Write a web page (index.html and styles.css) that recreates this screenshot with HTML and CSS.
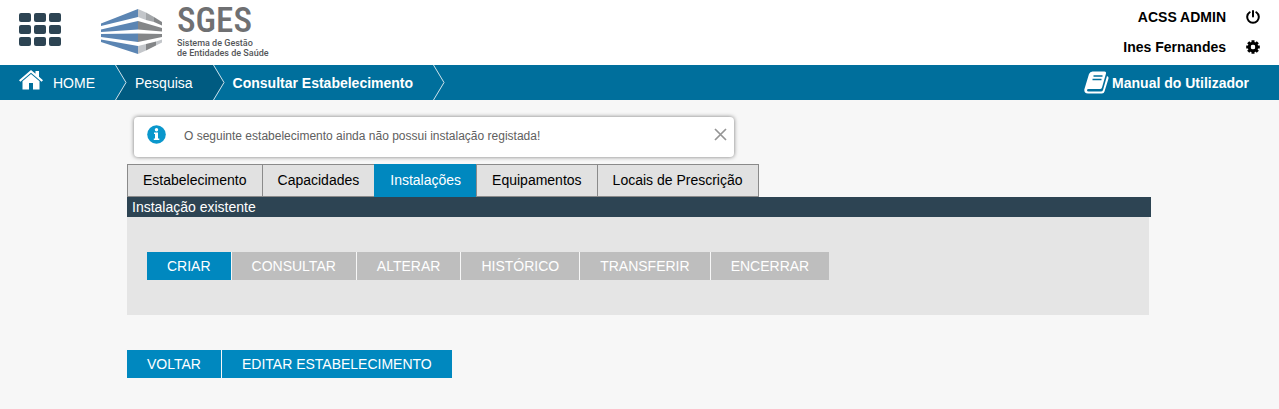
FILE: index.html
```html
<!DOCTYPE html>
<html lang="pt">
<head>
<meta charset="utf-8">
<title>SGES - Consultar Estabelecimento</title>
<link rel="stylesheet" href="styles.css">
</head>
<body>
<header class="header">
  <button class="apps" type="button" aria-label="Menu">
    <svg width="42" height="34" viewBox="0 0 42 34" fill="#2d4453">
      <rect x="0" y="0" width="12" height="9" rx="2"/><rect x="15" y="0" width="12" height="9" rx="2"/><rect x="30" y="0" width="12" height="9" rx="2"/>
      <rect x="0" y="12" width="12" height="9" rx="2"/><rect x="15" y="12" width="12" height="9" rx="2"/><rect x="30" y="12" width="12" height="9" rx="2"/>
      <rect x="0" y="24" width="12" height="9" rx="2"/><rect x="15" y="24" width="12" height="9" rx="2"/><rect x="30" y="24" width="12" height="9" rx="2"/>
    </svg>
  </button>
  <a class="logo" href="#">
    <svg width="62" height="46" viewBox="0 0 62 46">
      <g fill="#5b85b3">
        <path d="M0 14.5 37 0v8L0 17z"/>
        <path d="M0 20.500 37 12v8.500L0 23z"/>
        <path d="M0 25 37 24.500V33L0 28z"/>
        <path d="M0 30.500 37 37v8L0 33z"/>
      </g>
      <g fill="#848688">
        <path d="M37 12 61 19v3.500l-24-2z"/>
        <path d="M37 24.500 61 25v3l-24 5z"/>
        <path d="M53 8 61 13v3.500l-8-3.500z"/>
        <path d="M45 35 55 32.500v4L45 41.500z"/>
      </g>
      <g fill="#c3c6ca">
        <path d="M37 0 45 3.500V11l-8-3z"/>
        <path d="M37 37 45 35v6.500L37 45z"/>
        <path d="M55 32.500 61 30.500v3l-6 3z"/>
      </g>
      <path d="M45 3.500 53 8v5l-8-2z" fill="#a3a6a9"/>
    </svg>
    <span class="wordmark">
      <span class="brand">SGES</span>
      <span class="tagline">Sistema de Gestão<br>de Entidades de Saúde</span>
    </span>
  </a>
  <div class="account">
    <div class="account-row">
      <span>ACSS ADMIN</span>
      <button type="button" class="icon-button" aria-label="Sair">
        <svg width="14" height="14" viewBox="0 0 14 14" fill="none" stroke="#000" stroke-width="2" stroke-linecap="round"><path d="M7 1v5.500M3.700 2.200a5.800 5.800 0 1 0 6.600 0"/></svg>
      </button>
    </div>
    <div class="account-row">
      <span>Ines Fernandes</span>
      <button type="button" class="icon-button" aria-label="Definições">
        <svg width="14" height="14" viewBox="0 0 14 14"><circle cx="7" cy="7" r="3.700" fill="none" stroke="#000" stroke-width="3"/><path d="M7 .2v3M7 10.800v3M.2 7h3M10.800 7h3M2.200 2.200l2 2M9.800 9.800l2 2M2.200 11.800l2-2M9.800 4.200l2-2" stroke="#000" stroke-width="3"/><circle cx="7" cy="7" r="2.200" fill="#fff"/></svg>
      </button>
    </div>
  </div>
</header>

<nav class="bar" aria-label="Navegação">
  <ol class="crumbs">
    <li class="crumb crumb-home">
      <a href="#">
        <svg width="24" height="20" viewBox="0 0 24 20" fill="#fff"><path d="M12 0 0 10.300l1.400 1.500L12 2.800l10.600 9L24 10.300l-4-3.500V1h-3.500v2.800z"/><path d="M12 4 3.500 11.200V19.500H10V13h4v6.500h6.500V11.200z"/></svg>
        <span>HOME</span>
      </a>
      <svg class="chevron" width="12" height="35" viewBox="0 0 12 35"><path d="M0 0h12v35H0l11-17.500z" fill="#005b81"/><path d="M.5 0 11 17.500.5 35" fill="none" stroke="#cfe3ec"/></svg>
    </li>
    <li class="crumb crumb-search">
      <a href="#">Pesquisa</a>
      <svg class="chevron" width="12" height="35" viewBox="0 0 12 35"><path d="M0 0h12v35H0l11-17.500z" fill="#006f9c"/><path d="M.5 0 11 17.500.5 35" fill="none" stroke="#cfe3ec"/></svg>
    </li>
    <li class="crumb crumb-current">
      <a href="#" aria-current="page">Consultar Estabelecimento</a>
      <svg class="chevron" width="12" height="35" viewBox="0 0 12 35"><path d="M.5 0 11 17.500.5 35" fill="none" stroke="#cfe3ec"/></svg>
    </li>
  </ol>
  <a class="manual" href="#">
    <svg width="25" height="23" viewBox="0 0 25 23"><path d="M8.500.5h12q2 0 1.500 2l-4 14q-.5 1.500-2 1.500H4.500q-1.500 0-1.500 1.200T4.500 20.500H17q1.500 0 2-1.500l4-14q2 .5 1.500 2.500l-4 13Q20 22.500 18 22.500H4Q0 22.500.300 18.500L5 3Q6 .5 8.500.5z" fill="#fff"/><path d="M9.500 5h9M8.500 8.500h9" stroke="#006f9c" stroke-width="1.500"/></svg>
    <span>Manual do Utilizador</span>
  </a>
</nav>

<main class="content">
  <div class="alert" role="status">
    <svg width="19" height="19" viewBox="0 0 19 19"><circle cx="9.500" cy="9.500" r="9.300" fill="#0a97cc"/><circle cx="9.500" cy="4.700" r="1.700" fill="#fff"/><path d="M7 7.500h4v6h1.300V15H6.800v-1.500H8V9H7z" fill="#fff"/></svg>
    <p class="alert-text">O seguinte estabelecimento ainda não possui instalação registada!</p>
    <button class="close" type="button" aria-label="Fechar">
      <svg width="13" height="13" viewBox="0 0 13 13"><path d="M1 1l11 11M12 1 1 12" stroke="#959595" stroke-width="1.700"/></svg>
    </button>
  </div>

  <div class="tabs" role="tablist">
    <button class="tab" type="button" role="tab">Estabelecimento</button>
    <button class="tab" type="button" role="tab">Capacidades</button>
    <button class="tab tab-active" type="button" role="tab" aria-selected="true">Instalações</button>
    <button class="tab" type="button" role="tab">Equipamentos</button>
    <button class="tab" type="button" role="tab">Locais de Prescrição</button>
  </div>

  <h2 class="panel-title">Instalação existente</h2>
  <section class="panel">
    <div class="actions">
      <button class="btn" type="button">CRIAR</button>
      <button class="btn" type="button" disabled>CONSULTAR</button>
      <button class="btn" type="button" disabled>ALTERAR</button>
      <button class="btn" type="button" disabled>HISTÓRICO</button>
      <button class="btn" type="button" disabled>TRANSFERIR</button>
      <button class="btn" type="button" disabled>ENCERRAR</button>
    </div>
  </section>

  <div class="actions">
    <button class="btn" type="button">VOLTAR</button>
    <button class="btn" type="button">EDITAR ESTABELECIMENTO</button>
  </div>
</main>
</body>
</html>
```

FILE: styles.css
```css
* {
  box-sizing: border-box;
}

body {
  margin: 0;
  background: #f7f7f7;
  color: #000;
  font: 14px/20px "Liberation Sans", Arial, sans-serif;
}

button {
  margin: 0;
  padding: 0;
  border: 0;
  background: none;
  color: inherit;
  font: inherit;
  cursor: pointer;
}

a {
  color: inherit;
  text-decoration: none;
}

svg {
  display: block;
  flex: none;
}

.header {
  display: flex;
  align-items: flex-start;
  height: 65px;
  padding: 0 19px;
  background: #fff;
}

.apps {
  margin-top: 13px;
}

.logo {
  display: flex;
  align-items: flex-start;
  gap: 14px;
  margin-left: 40px;
}

.logo > svg {
  margin-top: 9px;
}

.wordmark {
  display: flex;
  flex-direction: column;
  padding-top: 4px;
  color: #6f7072;
}

.brand {
  font: 500 35px/34px "Roboto Condensed", "Liberation Sans Narrow", Roboto, sans-serif;
}

.tagline {
  color: #55575a;
  font: 500 9px/10px Roboto, sans-serif;
  white-space: nowrap;
}

.account {
  display: flex;
  flex-direction: column;
  gap: 10px;
  margin-left: auto;
  padding-top: 7px;
  font-weight: bold;
}

.account-row {
  display: flex;
  justify-content: flex-end;
  align-items: center;
  gap: 20px;
}

.bar {
  display: flex;
  justify-content: space-between;
  height: 35px;
  padding: 0 30px 0 19px;
  background: #006f9c;
  color: #fff;
}

.crumbs {
  display: flex;
  margin: 0;
  padding: 0;
  list-style: none;
}

.crumb {
  display: flex;
  align-items: center;
}

.crumb-home a {
  display: flex;
  align-items: center;
  gap: 10px;
  padding-right: 20px;
}

.crumb-home a svg {
  margin-bottom: 5px;
}

.crumb-search {
  background: #005b81;
}

.crumb-search a {
  padding: 0 20px 0 8px;
}

.crumb-current {
  font-weight: bold;
}

.crumb-current a {
  padding: 0 20px 0 8px;
}

.manual {
  display: flex;
  align-items: center;
  gap: 3px;
  font-weight: bold;
}

.content {
  margin: 0 128px 0 127px;
  padding-top: 17px;
}

.alert {
  display: flex;
  align-items: flex-start;
  max-width: 600px;
  margin: 0 7px;
  padding: 8px 7px 11px 13px;
  border-radius: 4px;
  background: #fff;
  box-shadow: 0 0 4px #777;
}

.alert-text {
  flex: 1;
  margin: 0 0 0 18px;
  padding-top: 1px;
  color: #606060;
  font-size: 12px;
  line-height: 20px;
}

.close {
  margin-top: 3px;
}

.tabs {
  display: flex;
  margin-top: 7px;
}

.tab {
  padding: 5px 15px 6px;
  border: 1px solid #8a8a8a;
  background: #e1e1e1;
  line-height: 20px;
}

.tab + .tab {
  margin-left: -1px;
}

.tab-active {
  border-color: #0088bf;
  background: #0088bf;
  color: #fff;
}

.panel-title {
  margin: 0;
  padding: 0 5px;
  background: #2d4453;
  color: #fff;
  font-size: 14px;
  font-weight: normal;
  line-height: 20px;
}

.panel {
  margin: 0 2px 35px 0;
  padding: 35px 20px;
  background: #e5e5e5;
}

.actions {
  display: flex;
}

.btn {
  padding: 4px 20px;
  background: #0088bf;
  color: #fff;
}

.btn + .btn {
  border-left: 1px solid #f7f7f7;
}

.btn:disabled {
  background: #bebebe;
  cursor: default;
}
```
